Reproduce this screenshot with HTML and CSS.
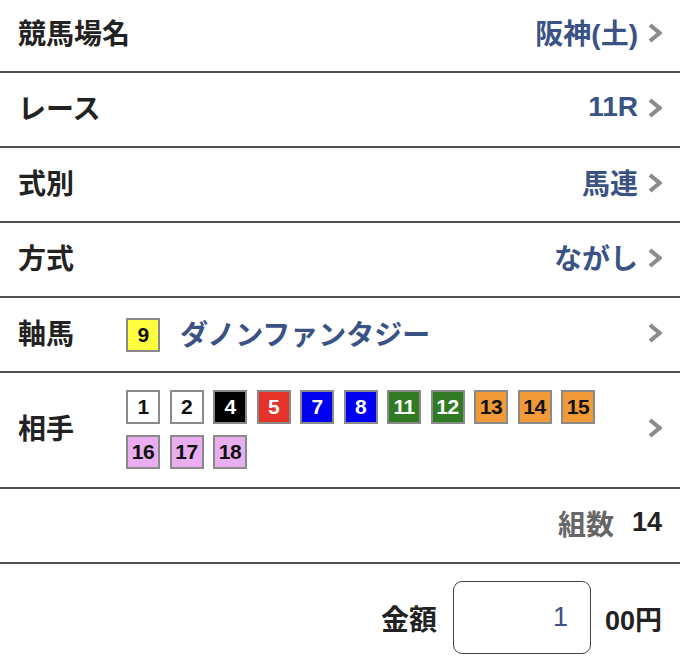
FILE: index.html
```html
<!DOCTYPE html>
<html lang="ja">
<head>
<meta charset="utf-8">
<link rel="stylesheet" href="styles.css">
</head>
<body>
<div class="list">
  <div class="row">
    <div class="label">競馬場名</div>
    <div class="value">阪神(土)</div>
    <svg class="chev" viewBox="0 0 14 20"><polyline points="2,2 11.5,10 2,18"/></svg>
  </div>
  <div class="row">
    <div class="label">レース</div>
    <div class="value">11R</div>
    <svg class="chev" viewBox="0 0 14 20"><polyline points="2,2 11.5,10 2,18"/></svg>
  </div>
  <div class="row">
    <div class="label">式別</div>
    <div class="value">馬連</div>
    <svg class="chev" viewBox="0 0 14 20"><polyline points="2,2 11.5,10 2,18"/></svg>
  </div>
  <div class="row">
    <div class="label">方式</div>
    <div class="value">ながし</div>
    <svg class="chev" viewBox="0 0 14 20"><polyline points="2,2 11.5,10 2,18"/></svg>
  </div>
  <div class="row">
    <div class="label">軸馬</div>
    <div class="axis">
      <span class="badge c-yellow">9</span>
      <span class="horse">ダノンファンタジー</span>
    </div>
    <svg class="chev" viewBox="0 0 14 20"><polyline points="2,2 11.5,10 2,18"/></svg>
  </div>
  <div class="row row-tall">
    <div class="label">相手</div>
    <div class="badges">
      <span class="badge c-white">1</span>
      <span class="badge c-white">2</span>
      <span class="badge c-black">4</span>
      <span class="badge c-red">5</span>
      <span class="badge c-blue">7</span>
      <span class="badge c-blue">8</span>
      <span class="badge c-green">11</span>
      <span class="badge c-green">12</span>
      <span class="badge c-orange">13</span>
      <span class="badge c-orange">14</span>
      <span class="badge c-orange">15</span>
      <span class="badge c-pink">16</span>
      <span class="badge c-pink">17</span>
      <span class="badge c-pink">18</span>
    </div>
    <svg class="chev" viewBox="0 0 14 20"><polyline points="2,2 11.5,10 2,18"/></svg>
  </div>
  <div class="row row-count">
    <span class="count-label">組数</span>
    <span class="count-num">14</span>
  </div>
  <div class="row row-amount">
    <span class="amount-label">金額</span>
    <div class="amount-box">1</div>
    <span class="amount-unit">00円</span>
  </div>
</div>
</body>
</html>
```
FILE: styles.css
```css
html, body {
  margin: 0;
  padding: 0;
  background: #fff;
}
body {
  font-family: "Liberation Sans", "Noto Sans CJK JP", sans-serif;
  color: #222;
  width: 680px;
  overflow: hidden;
}
.list {
  margin-top: -2px;
}
.row {
  display: flex;
  align-items: center;
  height: 73px;
  padding: 0 18px;
  border-bottom: 2px solid #505050;
  box-sizing: content-box;
  white-space: nowrap;
}
.label {
  width: 108px;
  flex: none;
  font-size: 28px;
  font-weight: bold;
  padding-bottom: 6px;
}
.value {
  margin-left: auto;
  font-size: 28px;
  font-weight: bold;
  color: #3a5284;
  padding-bottom: 6px;
}
.chev {
  width: 14px;
  height: 20px;
  margin-left: 10px;
  flex: none;
  margin-bottom: 4px;
}
.chev polyline {
  fill: none;
  stroke: #8c8c8c;
  stroke-width: 4.2;
  stroke-linecap: butt;
  stroke-linejoin: miter;
}
.axis {
  display: flex;
  align-items: center;
  gap: 20px;
  flex: 1;
}
.horse {
  font-size: 28px;
  font-weight: bold;
  color: #3a5284;
  padding-bottom: 4px;
}
.badge {
  width: 34px;
  height: 34px;
  box-sizing: border-box;
  border: 2px solid #8a8a8a;
  display: flex;
  align-items: center;
  justify-content: center;
  font-family: "Liberation Sans", sans-serif;
  font-weight: bold;
  font-size: 21px;
  letter-spacing: -0.5px;
  flex: none;
}
.c-yellow { background: #ffff40; color: #111; }
.c-white { background: #fff; color: #111; }
.c-black { background: #000; color: #fff; }
.c-red { background: #e5332a; color: #fff; }
.c-blue { background: #0000f0; color: #fff; }
.c-green { background: #2f7a22; color: #fff; }
.c-orange { background: #f19a38; color: #111; }
.c-pink { background: #e8aef0; color: #111; }
.row-tall {
  height: 114px;
}
.badges {
  display: flex;
  flex-wrap: wrap;
  column-gap: 9.5px;
  row-gap: 11px;
  width: 480px;
  flex: none;
  align-self: flex-start;
  padding-top: 17px;
}
.row-tall .chev {
  margin-left: auto;
}
.row-count {
  justify-content: flex-end;
  gap: 18px;
}
.count-label {
  font-size: 28px;
  font-weight: bold;
  color: #666;
  padding-bottom: 6px;
}
.count-num {
  font-size: 27px;
  font-weight: bold;
  color: #222;
  padding-bottom: 6px;
}
.row-amount {
  justify-content: flex-end;
  align-items: flex-start;
  height: 110px;
  padding-top: 17px;
  border-bottom: none;
}
.amount-label {
  font-size: 28px;
  font-weight: bold;
  margin-top: 17px;
}
.amount-box {
  width: 138px;
  height: 73px;
  box-sizing: border-box;
  border: 1.5px solid #444;
  border-radius: 9px;
  margin-left: 16px;
  margin-right: 14px;
  display: flex;
  align-items: center;
  justify-content: flex-end;
  padding-right: 22px;
  font-size: 27px;
  color: #3a5284;
}
.amount-unit {
  font-size: 27px;
  font-weight: bold;
  margin-top: 18px;
}
```
